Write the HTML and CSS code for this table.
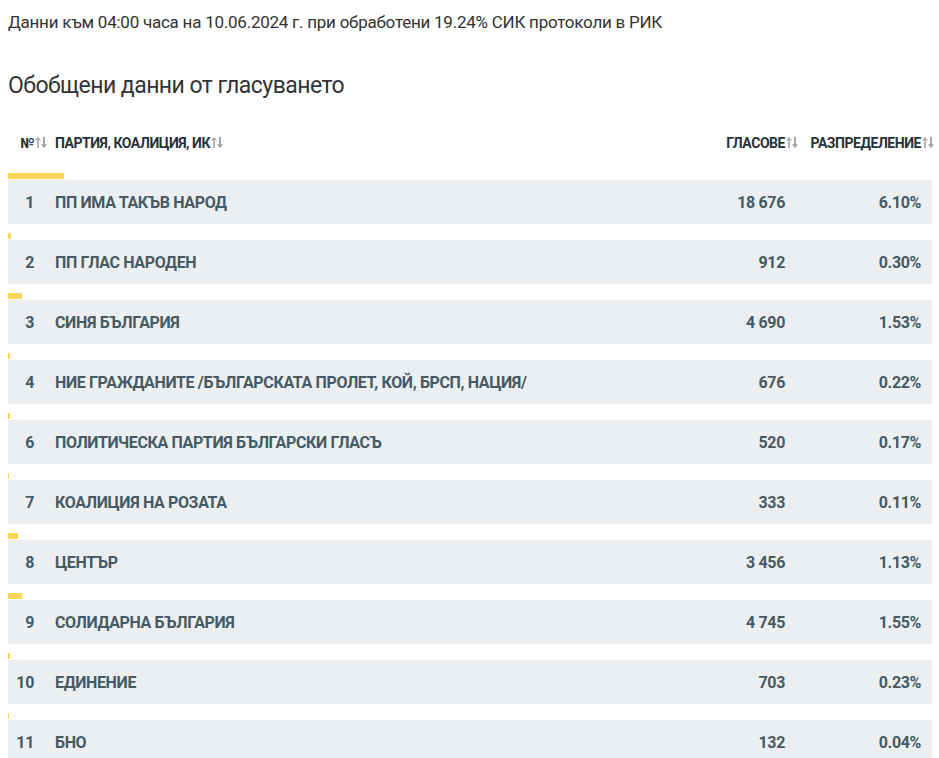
FILE: index.html
```html
<!DOCTYPE html>
<html lang="bg">
<head>
<meta charset="utf-8">
<link rel="stylesheet" href="styles.css">
</head>
<body>
<p class="meta">Данни към 04:00 часа на 10.06.2024 г. при обработени 19.24% СИК протоколи в РИК</p>
<h2 class="title">Обобщени данни от гласуването</h2>
<div class="table">
  <div class="head">
    <div class="c-num"><span class="sort">№</span></div>
    <div class="c-name"><span class="sort">ПАРТИЯ, КОАЛИЦИЯ, ИК</span></div>
    <div class="c-votes"><span class="sort">ГЛАСОВЕ</span></div>
    <div class="c-pct"><span class="sort">РАЗПРЕДЕЛЕНИЕ</span></div>
  </div>

  <div class="item"><div class="bar" style="width:6.10%"></div>
    <div class="row"><div class="c-num">1</div><div class="c-name">ПП ИМА ТАКЪВ НАРОД</div><div class="c-votes">18 676</div><div class="c-pct">6.10%</div></div></div>
  <div class="item"><div class="bar" style="width:0.30%"></div>
    <div class="row"><div class="c-num">2</div><div class="c-name">ПП ГЛАС НАРОДЕН</div><div class="c-votes">912</div><div class="c-pct">0.30%</div></div></div>
  <div class="item"><div class="bar" style="width:1.53%"></div>
    <div class="row"><div class="c-num">3</div><div class="c-name">СИНЯ БЪЛГАРИЯ</div><div class="c-votes">4 690</div><div class="c-pct">1.53%</div></div></div>
  <div class="item"><div class="bar" style="width:0.22%"></div>
    <div class="row"><div class="c-num">4</div><div class="c-name">НИЕ ГРАЖДАНИТЕ /БЪЛГАРСКАТА ПРОЛЕТ, КОЙ, БРСП, НАЦИЯ/</div><div class="c-votes">676</div><div class="c-pct">0.22%</div></div></div>
  <div class="item"><div class="bar" style="width:0.17%"></div>
    <div class="row"><div class="c-num">6</div><div class="c-name">ПОЛИТИЧЕСКА ПАРТИЯ БЪЛГАРСКИ ГЛАСЪ</div><div class="c-votes">520</div><div class="c-pct">0.17%</div></div></div>
  <div class="item"><div class="bar" style="width:0.11%"></div>
    <div class="row"><div class="c-num">7</div><div class="c-name">КОАЛИЦИЯ НА РОЗАТА</div><div class="c-votes">333</div><div class="c-pct">0.11%</div></div></div>
  <div class="item"><div class="bar" style="width:1.13%"></div>
    <div class="row"><div class="c-num">8</div><div class="c-name">ЦЕНТЪР</div><div class="c-votes">3 456</div><div class="c-pct">1.13%</div></div></div>
  <div class="item"><div class="bar" style="width:1.55%"></div>
    <div class="row"><div class="c-num">9</div><div class="c-name">СОЛИДАРНА БЪЛГАРИЯ</div><div class="c-votes">4 745</div><div class="c-pct">1.55%</div></div></div>
  <div class="item"><div class="bar" style="width:0.23%"></div>
    <div class="row"><div class="c-num">10</div><div class="c-name">ЕДИНЕНИЕ</div><div class="c-votes">703</div><div class="c-pct">0.23%</div></div></div>
  <div class="item"><div class="bar" style="width:0.04%"></div>
    <div class="row"><div class="c-num">11</div><div class="c-name">БНО</div><div class="c-votes">132</div><div class="c-pct">0.04%</div></div></div>
</div>
</body>
</html>
```

FILE: styles.css
```css
html, body {
  margin: 0;
  padding: 0;
  background: #ffffff;
}
body {
  padding: 8px;
  font-family: Roboto, "Noto Sans", sans-serif;
  color: #333333;
  overflow: hidden;
}
.meta {
  margin: 3px 0 0 0;
  font-size: 17px;
  line-height: 22px;
  letter-spacing: -0.24px;
  color: #333333;
}
.title {
  margin: 38px 0 0 0;
  font-size: 23px;
  line-height: 30px;
  font-weight: 400;
  letter-spacing: -0.55px;
  color: #333333;
}
.table {
  width: 924px;
  margin-top: 27px;
}
.head, .row {
  display: grid;
  grid-template-columns: 26px 1fr 120px 115px;
  column-gap: 21px;
  padding-right: 11px;
  align-items: center;
}
.head {
  height: 30px;
  font-size: 14px;
  font-weight: 700;
  letter-spacing: -0.45px;
  color: #263238;
  margin-bottom: 15px;
}
.sort {
  position: relative;
}
.sort::after {
  content: "";
  position: absolute;
  left: 100%;
  top: 1px;
  width: 14px;
  height: 13px;
  background: url("data:image/svg+xml;utf8,<svg xmlns='http://www.w3.org/2000/svg' width='14' height='13' viewBox='0 0 14 13'><path d='M4 12V3' stroke='%23b5b5b5' stroke-width='2' fill='none'/><path d='M0.8 4.5L4 0.8L7.2 4.5Z' fill='%23b5b5b5'/><path d='M10 1V9' stroke='%23a3a3a3' stroke-width='2' fill='none'/><path d='M6.8 8.2L10 12L13.2 8.2Z' fill='%23a3a3a3'/></svg>") no-repeat;
}
.c-num, .c-votes, .c-pct {
  text-align: right;
  white-space: nowrap;
}
.c-name {
  white-space: nowrap;
}
.item {
  margin-bottom: 9px;
}
.bar {
  height: 6px;
  background: #fbd55b;
  margin-bottom: 1px;
  min-width: 1px;
}
.row {
  height: 44px;
  background: #eceff1;
  font-size: 16px;
  font-weight: 700;
  letter-spacing: -0.36px;
  color: #455a64;
}
```
